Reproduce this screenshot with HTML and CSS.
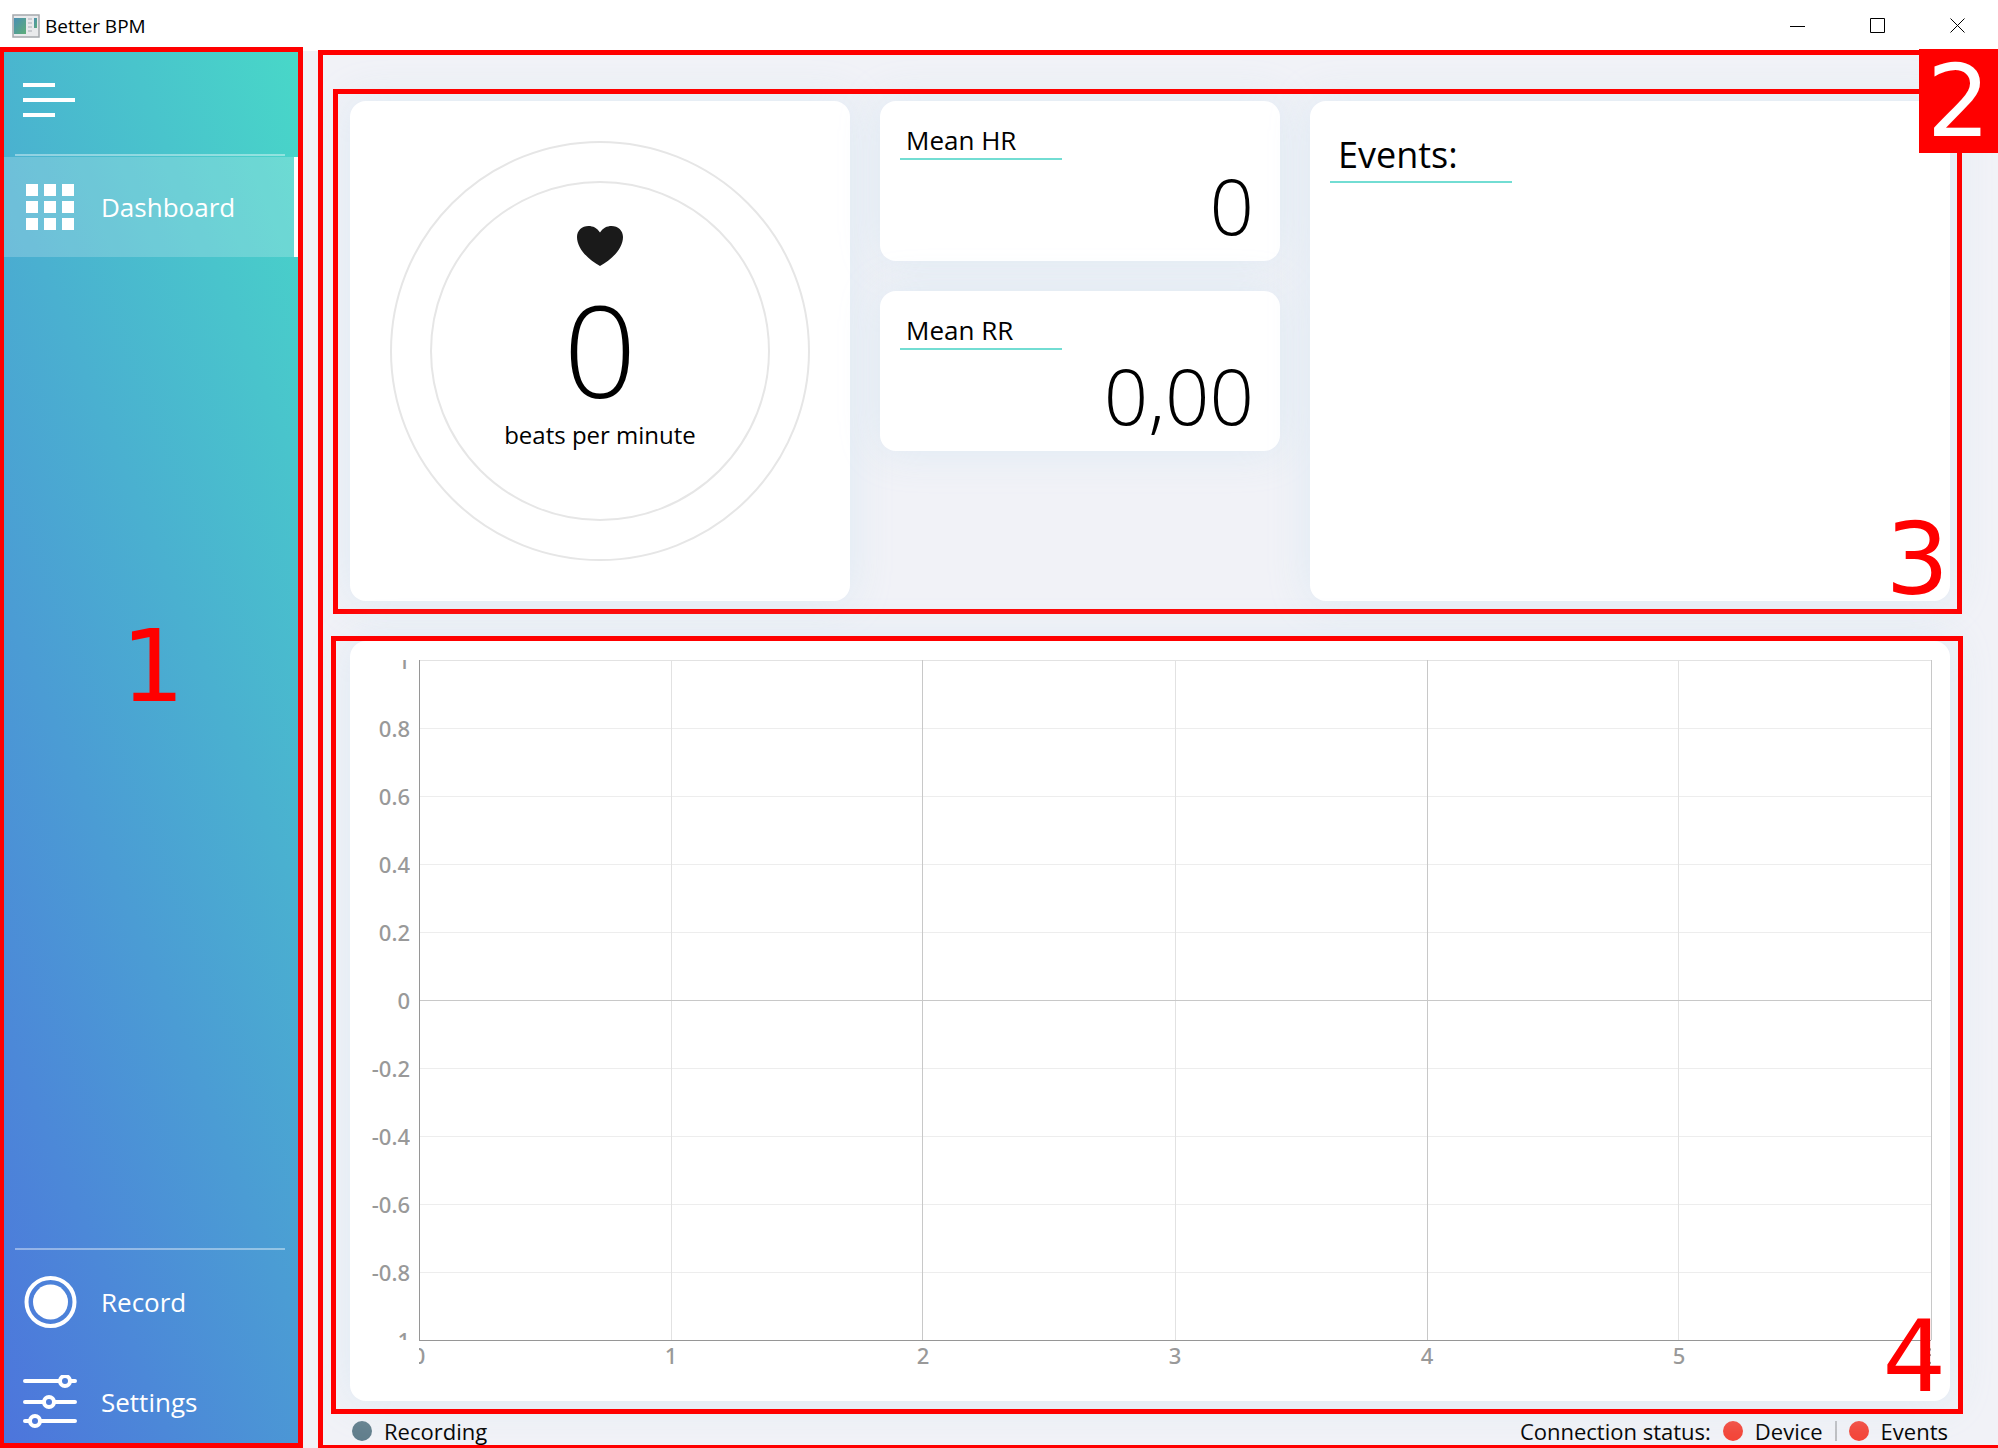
FILE: index.html
```html
<!DOCTYPE html>
<html lang="en">
<head>
<meta charset="utf-8">
<meta name="viewport" content="width=device-width, initial-scale=1">
<title>Better BPM</title>
<link rel="stylesheet" href="styles.css">
</head>
<body>
<header class="titlebar">
  <svg class="app-icon" width="28" height="24" viewBox="0 0 28 24" aria-hidden="true">
    <defs><linearGradient id="pane" x1="0" y1="0" x2="1" y2="1"><stop offset="0" stop-color="#4a8fb4"/><stop offset="1" stop-color="#5fae78"/></linearGradient></defs>
    <rect x="1" y="1" width="26" height="22" fill="#e9eaec" stroke="#a4a8ac" stroke-width="1.5"/>
    <rect x="2" y="4" width="12" height="16" fill="url(#pane)"/>
    <path d="M16 5h4M16 9h4M16 13h4M16 17h4" stroke="#c9cbd0" stroke-width="2"/>
    <rect x="22" y="4" width="3" height="10" fill="url(#pane)"/>
  </svg>
  <h1 class="title">Better BPM</h1>
  <div class="window-controls">
    <button type="button" aria-label="Minimize"><svg width="16" height="16"><path d="M0 8.500h15"/></svg></button>
    <button type="button" aria-label="Maximize"><svg width="16" height="16"><path d="M.5 .5h14v14h-14z"/></svg></button>
    <button type="button" aria-label="Close"><svg width="16" height="16"><path d="M.5 .5l14 14M14.500 .5l-14 14"/></svg></button>
  </div>
</header>
<div class="app">
  <nav class="sidebar">
    <button type="button" class="menu-toggle" aria-label="Toggle menu">
      <svg width="54" height="54" viewBox="0 0 54 54"><path d="M0 12h32M0 27h52M0 42h32" stroke="#fff" stroke-width="4"/></svg>
    </button>
    <a href="#dashboard" class="nav-item active">
      <svg width="54" height="54" viewBox="0 0 54 54"><path fill="#fff" d="M3 4h12v12H3zM21 4h12v12H21zM39 4h12v12H39zM3 21h12v12H3zM21 21h12v12H21zM39 21h12v12H39zM3 38h12v12H3zM21 38h12v12H21zM39 38h12v12H39z"/></svg>
      <span>Dashboard</span>
    </a>
    <div class="nav-bottom">
      <a href="#record" class="nav-item">
        <svg width="54" height="54" viewBox="0 0 54 54"><circle cx="27.500" cy="27" r="24" fill="none" stroke="#fff" stroke-width="4"/><circle cx="27.500" cy="27" r="17.500" fill="#fff"/></svg>
        <span>Record</span>
      </a>
      <a href="#settings" class="nav-item">
        <svg width="54" height="54" viewBox="0 0 54 54" fill="none" stroke="#fff" stroke-width="4" stroke-linecap="round"><path d="M2 6h35M47 6h5M2 27h19M31 27h21M2 46h5M17 46h35"/><circle cx="42" cy="6" r="5"/><circle cx="26" cy="27" r="5"/><circle cx="12" cy="46" r="5"/></svg>
        <span>Settings</span>
      </a>
    </div>
    <div class="mark mark-1"><span>1</span></div>
  </nav>
  <main class="content">
    <section class="stats">
      <article class="card bpm">
        <div class="ring ring-outer"><div class="ring ring-inner">
          <svg width="46" height="42" viewBox="0 0 46 42" aria-hidden="true"><path fill="#1a1a1a" d="M23 7.500C26 3 30 1 34.500 1C41 1 46 5.500 46 12C46 24 34 35 23 41C12 35 0 24 0 12C0 5.500 5 1 11.500 1C16 1 20 3 23 7.500Z"/></svg>
          <strong class="bpm-value">0</strong>
          <span class="bpm-unit">beats per minute</span>
        </div></div>
      </article>
      <div class="means">
        <article class="card mean"><h2>Mean HR</h2><p>0</p></article>
        <article class="card mean"><h2>Mean RR</h2><p>0,00</p></article>
      </div>
      <article class="card events"><h2>Events:</h2></article>
      <div class="mark mark-3"><span>3</span></div>
    </section>
    <section class="card chart">
      <svg class="y-axis" aria-hidden="true">
        <text x="100%" y="0%" dy="9">1</text><text x="100%" y="10%" dy="9">0.8</text><text x="100%" y="20%" dy="9">0.6</text><text x="100%" y="30%" dy="9">0.4</text><text x="100%" y="40%" dy="9">0.2</text><text x="100%" y="50%" dy="9">0</text><text x="100%" y="60%" dy="9">-0.2</text><text x="100%" y="70%" dy="9">-0.4</text><text x="100%" y="80%" dy="9">-0.6</text><text x="100%" y="90%" dy="9">-0.8</text><text x="100%" y="100%" dy="9">-1</text>
      </svg>
      <svg class="plot" role="img" aria-label="Empty heart rate plot">
        <g class="row-lines"><line x2="100%" y1="10%" y2="10%"/><line x2="100%" y1="20%" y2="20%"/><line x2="100%" y1="30%" y2="30%"/><line x2="100%" y1="40%" y2="40%"/><line x2="100%" y1="60%" y2="60%"/><line x2="100%" y1="70%" y2="70%"/><line x2="100%" y1="80%" y2="80%"/><line x2="100%" y1="90%" y2="90%"/></g>
        <g class="minor"><line x2="100%" y1="0" y2="0"/><line x1="16.667%" x2="16.667%" y2="100%"/><line x1="50%" x2="50%" y2="100%"/><line x1="83.333%" x2="83.333%" y2="100%"/></g>
        <g class="major"><line x2="100%" y1="50%" y2="50%"/><line x1="33.333%" x2="33.333%" y2="100%"/><line x1="66.667%" x2="66.667%" y2="100%"/><line x1="100%" x2="100%" y2="100%"/></g>
        <g class="axes"><line x2="100%" y1="100%" y2="100%"/><line y2="100%"/></g>
      </svg>
      <svg class="x-axis" aria-hidden="true">
        <text x="0%" y="24">0</text><text x="16.667%" y="24">1</text><text x="33.333%" y="24">2</text><text x="50%" y="24">3</text><text x="66.667%" y="24">4</text><text x="83.333%" y="24">5</text><text x="100%" y="24">6</text>
      </svg>
      <div class="mark mark-4"><span>4</span></div>
    </section>
    <footer class="status">
      <span class="dot idle"></span><span>Recording</span>
      <span class="status-label">Connection status:</span>
      <span class="dot off"></span><span>Device</span>
      <span class="divider"></span>
      <span class="dot off"></span><span>Events</span>
    </footer>
    <div class="mark mark-2"><span>2</span></div>
  </main>
</div>
</body>
</html>
```
FILE: styles.css
```css
* { box-sizing: border-box; }

body {
  margin: 0;
  min-height: 100vh;
  display: flex;
  flex-direction: column;
  overflow-x: hidden;
  background: #f1f2f7;
  color: #000;
  font-family: "Open Sans", "Noto Sans", sans-serif;
}

h1, h2, p { margin: 0; font-weight: 400; }
button { border: 0; padding: 0; background: none; font: inherit; }
svg { display: block; }

.titlebar {
  height: 51px;
  display: flex;
  align-items: center;
  gap: 5px;
  padding-left: 12px;
  background: #fff;
}
.title { font-size: 19px; line-height: 26px; }
.window-controls { display: flex; margin-left: auto; }
.window-controls button {
  width: 80px;
  height: 50px;
  display: grid;
  place-items: center;
}
.window-controls svg { fill: none; stroke: #000; }

.app { flex: 1; display: flex; }

.sidebar {
  position: relative;
  width: 300px;
  flex: none;
  display: flex;
  flex-direction: column;
  background: linear-gradient(248deg, #48d8c8, #4d74dc);
}
.menu-toggle {
  height: 106px;
  padding: 22px 23px 30px;
  background: linear-gradient(#fff6, #fff6) 15px 103px / 270px 2px no-repeat;
}
.nav-item {
  height: 100px;
  display: flex;
  align-items: center;
  gap: 24px;
  padding-left: 23px;
  color: #fff;
  font-size: 26px;
  line-height: 36px;
  text-decoration: none;
}
.nav-item.active { background: #fff3; border-right: 6px solid #fff; }
.nav-bottom {
  margin-top: auto;
  height: 200px;
  padding-top: 4px;
  overflow: clip;
  background: linear-gradient(#fff6, #fff6) 15px 0 / 270px 2px no-repeat;
}

.content {
  position: relative;
  flex: 1;
  min-width: 0;
  display: flex;
  flex-direction: column;
  padding: 50px 48px 0 50px;
}
.card {
  background: #fff;
  border-radius: 16px;
  box-shadow: 0 0 40px #d8e7f3cc;
}
.stats {
  position: relative;
  display: grid;
  grid-template-columns: 500px 400px 1fr;
  gap: 30px;
  min-height: 500px;
  margin-bottom: 40px;
}
.bpm { display: grid; place-items: center; }
.ring {
  display: flex;
  flex-direction: column;
  align-items: center;
  border: 2px solid #e6e6e6;
  border-radius: 50%;
}
.ring-outer { width: 420px; height: 420px; justify-content: center; }
.ring-inner { width: 340px; height: 340px; padding-top: 42px; gap: 4px; }
.bpm-value { margin-top: 12px; font-size: 128px; line-height: 132px; font-weight: 300; }
.bpm-unit { font-size: 24px; line-height: 32px; }
.means { display: flex; flex-direction: column; gap: 30px; }
.mean { height: 160px; padding: 23px 26px 0 20px; }
.mean h2 {
  width: 162px;
  padding: 0 0 2px 6px;
  border-bottom: 2px solid #72ddd3;
  font-size: 26px;
  line-height: 32px;
}
.mean p { font-size: 78px; line-height: 90px; text-align: right; font-weight: 300; }
.events { padding: 28px 20px; }
.events h2 {
  width: 182px;
  padding-left: 8px;
  border-bottom: 2px solid #72ddd3;
  font-size: 36px;
  line-height: 52px;
}

.chart {
  position: relative;
  flex: 1;
  display: grid;
  grid-template-columns: 60px 1fr;
  grid-template-rows: 1fr 61px;
  column-gap: 9px;
  min-height: 500px;
  padding: 19px 19px 0 0;
}
.chart svg { width: 100%; height: 100%; }
.chart text { fill: #999; font: 500 22px "Noto Sans", sans-serif; }
.y-axis text { text-anchor: end; }
.x-axis text { text-anchor: middle; }
.x-axis { grid-column: 2; }
.chart .plot { overflow: visible; }
.plot line { shape-rendering: crispEdges; }
.row-lines { stroke: #ededed; }
.minor { stroke: #e2e2e2; }
.major { stroke: #c8c8c8; }
.axes { stroke: #969696; }

.status {
  height: 47px;
  display: flex;
  align-items: center;
  gap: 12px;
  padding: 13px 2px 0;
  font-size: 22px;
  line-height: 30px;
}
.status-label { margin-left: auto; }
.dot { width: 20px; height: 20px; border-radius: 50%; }
.idle { background: #607d8b; }
.off { background: #f44336; }
.divider { width: 2px; height: 20px; background: #bdbec2; }

/* Numbered region outlines laid over the interface */
.mark {
  position: absolute;
  border: 5px solid #f00;
  color: #f00;
  font: 100px/104px "DejaVu Sans", sans-serif;
  pointer-events: none;
}
.mark span { position: absolute; }
.mark-1 { inset: -4px -3px 0 -1px; }
.mark-1 span { top: 563px; left: 117px; }
.mark-2 { inset: -1px -5px 0 18px; border-bottom-width: 3px; }
.mark-2 span {
  top: -6px;
  right: 0;
  width: 79px;
  height: 104px;
  line-height: 106px;
  background: #f00;
  color: #fff;
  text-align: center;
}
.mark-3 { inset: -12px -12px -13px -17px; }
.mark-3 span { right: 8px; bottom: -3px; }
.mark-4 { inset: -5px -13px -13px -19px; }
.mark-4 span { right: 12px; bottom: 0; }
```
